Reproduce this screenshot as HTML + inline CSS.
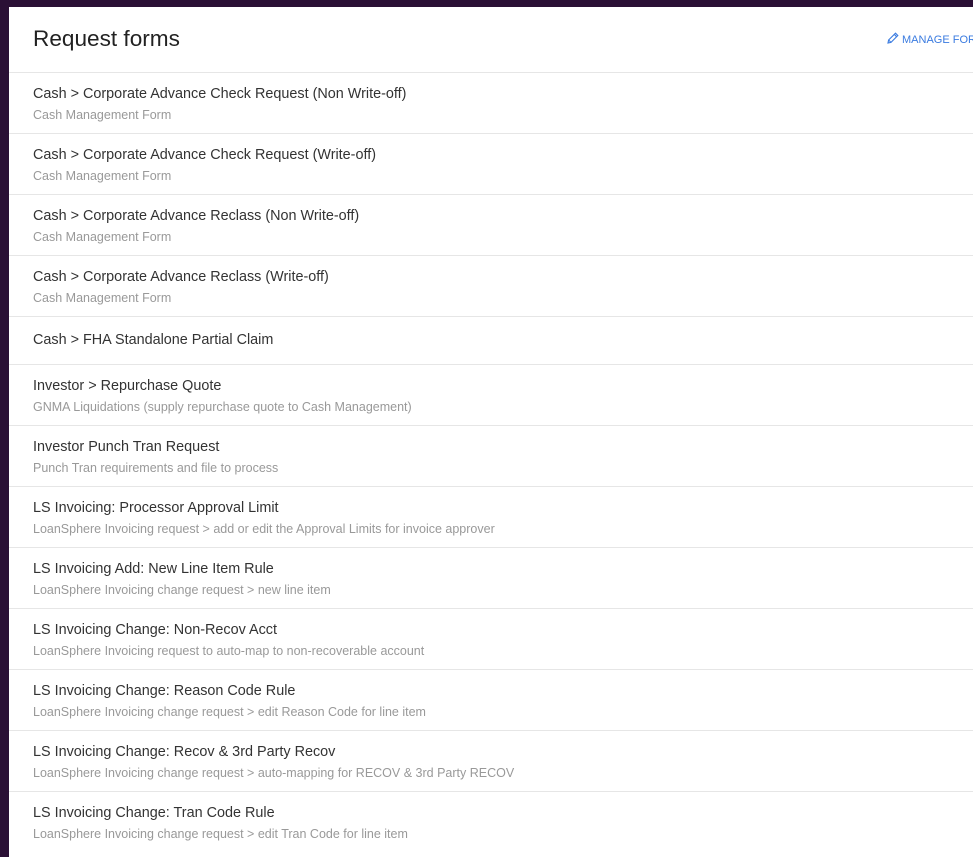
<!DOCTYPE html>
<html><head><style>
body{margin:0;background:#2a1035;width:973px;height:842px;overflow:hidden;font-family:"Liberation Sans",sans-serif}
.p{position:absolute;left:9px;top:7px;width:980px;height:850px;background:#fff}
h1{position:absolute;left:24px;top:19px;margin:0;font-weight:normal;font-size:22.6px;color:#222}
.m{position:absolute;left:877px;top:25px;font-size:11px;color:#3a7be0;white-space:nowrap}
.m svg{vertical-align:-2px;margin-right:3px}
.list{position:absolute;top:65px;left:0;width:100%}
.r{border-top:1px solid #e6e6e6;height:60px;padding-left:24px;box-sizing:content-box;position:relative}
.r.s{height:47px}
.t{position:absolute;top:13px;font-size:14.4px;color:#333}
.r.s .t{top:15px}
.d{position:absolute;top:35px;font-size:12.5px;color:#999}
</style></head><body><div class="p">
<h1>Request forms</h1>
<div class="m"><svg width="13" height="13" viewBox="0 0 13 13" fill="none" stroke="#3a7be0" stroke-width="1.1"><path d="M2 11l.6-3L9.5 1.2l2.3 2.3L5 10.4z M8.3 2.4l2.3 2.3 M2.6 8l2.4 2.4"/></svg>MANAGE FORMS</div>
<div class="list">
<div class="r"><div class="t">Cash &gt; Corporate Advance Check Request (Non Write-off)</div><div class="d">Cash Management Form</div></div>
<div class="r"><div class="t">Cash &gt; Corporate Advance Check Request (Write-off)</div><div class="d">Cash Management Form</div></div>
<div class="r"><div class="t">Cash &gt; Corporate Advance Reclass (Non Write-off)</div><div class="d">Cash Management Form</div></div>
<div class="r"><div class="t">Cash &gt; Corporate Advance Reclass (Write-off)</div><div class="d">Cash Management Form</div></div>
<div class="r s"><div class="t">Cash &gt; FHA Standalone Partial Claim</div></div>
<div class="r"><div class="t">Investor &gt; Repurchase Quote</div><div class="d">GNMA Liquidations (supply repurchase quote to Cash Management)</div></div>
<div class="r"><div class="t">Investor Punch Tran Request</div><div class="d">Punch Tran requirements and file to process</div></div>
<div class="r"><div class="t">LS Invoicing: Processor Approval Limit</div><div class="d">LoanSphere Invoicing request &gt; add or edit the Approval Limits for invoice approver</div></div>
<div class="r"><div class="t">LS Invoicing Add: New Line Item Rule</div><div class="d">LoanSphere Invoicing change request &gt; new line item</div></div>
<div class="r"><div class="t">LS Invoicing Change: Non-Recov Acct</div><div class="d">LoanSphere Invoicing request to auto-map to non-recoverable account</div></div>
<div class="r"><div class="t">LS Invoicing Change: Reason Code Rule</div><div class="d">LoanSphere Invoicing change request &gt; edit Reason Code for line item</div></div>
<div class="r"><div class="t">LS Invoicing Change: Recov &amp; 3rd Party Recov</div><div class="d">LoanSphere Invoicing change request &gt; auto-mapping for RECOV &amp; 3rd Party RECOV</div></div>
<div class="r"><div class="t">LS Invoicing Change: Tran Code Rule</div><div class="d">LoanSphere Invoicing change request &gt; edit Tran Code for line item</div></div>
</div></div></body></html>
